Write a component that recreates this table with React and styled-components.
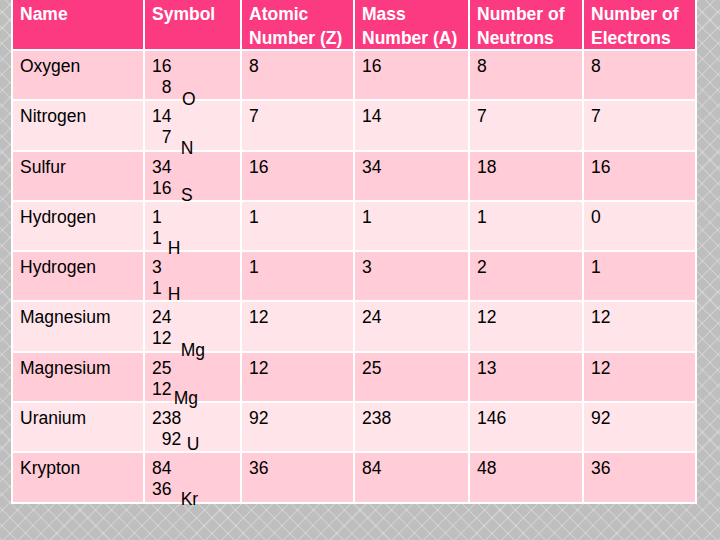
import React from "react";
import styled, { createGlobalStyle } from "styled-components";

const Global = createGlobalStyle`
  html, body { margin: 0; padding: 0; }
  body {
    width: 720px;
    height: 540px;
    overflow: hidden;
    font-family: "Liberation Sans", Arial, sans-serif;
    background-color: #bebebe;
    background-image:
      repeating-linear-gradient(45deg, rgba(255,255,255,0.22) 0 1.5px, transparent 1.5px 11px),
      repeating-linear-gradient(-45deg, rgba(255,255,255,0.22) 0 1.5px, transparent 1.5px 11px);
  }
`;

const Page = styled.div`
  padding: 0 0 0 11px;
`;

const Table = styled.div`
  display: grid;
  grid-template-columns: 130px 95px 111px 113px 112px 111px;
  grid-template-rows: 49px repeat(9, 48.3px);
  gap: 2px;
  padding: 0 2px 2px 2px;
  width: max-content;
  background: #ffffff;
  font-size: 17.5px;
`;

const HeadCell = styled.div`
  background: #fc3a82;
  color: #ffffff;
  font-weight: bold;
  line-height: 23.5px;
  padding: 3px 7px 0 7px;
`;

const Cell = styled.div`
  background: ${(p) => (p.$odd ? "#ffccd7" : "#ffe4ea")};
  color: #000000;
  line-height: 21px;
  padding: 5px 7px 0 7px;
  overflow: visible;
  min-width: 0;
`;

const SymbolWrap = styled.div`
  display: flex;
  align-items: flex-start;
`;

const Digits = styled.div`
  display: flex;
  flex-direction: column;
  text-align: right;
`;

const Sym = styled.span`
  position: relative;
  z-index: 1;
  margin-left: ${(p) => p.$dx}px;
  margin-top: ${(p) => p.$dy}px;
  line-height: 21px;
`;

const headers = [
  "Name",
  "Symbol",
  ["Atomic", "Number (Z)"],
  ["Mass", "Number (A)"],
  ["Number of", "Neutrons"],
  ["Number of", "Electrons"],
];

const rows = [
  { name: "Oxygen", a: "16", z: "8", s: "O", dx: 10.6, dy: 33, vals: ["8", "16", "8", "8"] },
  { name: "Nitrogen", a: "14", z: "7", s: "N", dx: 9.2, dy: 32, vals: ["7", "14", "7", "7"] },
  { name: "Sulfur", a: "34", z: "16", s: "S", dx: 9.5, dy: 28, vals: ["16", "34", "18", "16"] },
  { name: "Hydrogen", a: "1", z: "1", s: "H", dx: 6, dy: 31, vals: ["1", "1", "1", "0"] },
  { name: "Hydrogen", a: "3", z: "1", s: "H", dx: 6, dy: 27, vals: ["1", "3", "2", "1"] },
  { name: "Magnesium", a: "24", z: "12", s: "Mg", dx: 9.2, dy: 33, vals: ["12", "24", "12", "12"] },
  { name: "Magnesium", a: "25", z: "12", s: "Mg", dx: 2.2, dy: 30, vals: ["12", "25", "13", "12"] },
  { name: "Uranium", a: "238", z: "92", s: "U", dx: 5.5, dy: 26, vals: ["92", "238", "146", "92"] },
  { name: "Krypton", a: "84", z: "36", s: "Kr", dx: 9.2, dy: 31, vals: ["36", "84", "48", "36"] },
];

export default function App() {
  return (
    <>
      <Global />
      <Page>
        <Table>
          {headers.map((h, i) => (
            <HeadCell key={"h" + i}>
              {Array.isArray(h) ? (
                <>
                  {h[0]}
                  <br />
                  {h[1]}
                </>
              ) : (
                h
              )}
            </HeadCell>
          ))}
          {rows.map((r, ri) => {
            const odd = ri % 2 === 0;
            return (
              <React.Fragment key={"r" + ri}>
                <Cell $odd={odd}>{r.name}</Cell>
                <Cell $odd={odd}>
                  <SymbolWrap>
                    <Digits>
                      <span>{r.a}</span>
                      <span>{r.z}</span>
                    </Digits>
                    <Sym $dx={r.dx} $dy={r.dy}>{r.s}</Sym>
                  </SymbolWrap>
                </Cell>
                {r.vals.map((v, vi) => (
                  <Cell $odd={odd} key={vi}>{v}</Cell>
                ))}
              </React.Fragment>
            );
          })}
        </Table>
      </Page>
    </>
  );
}
